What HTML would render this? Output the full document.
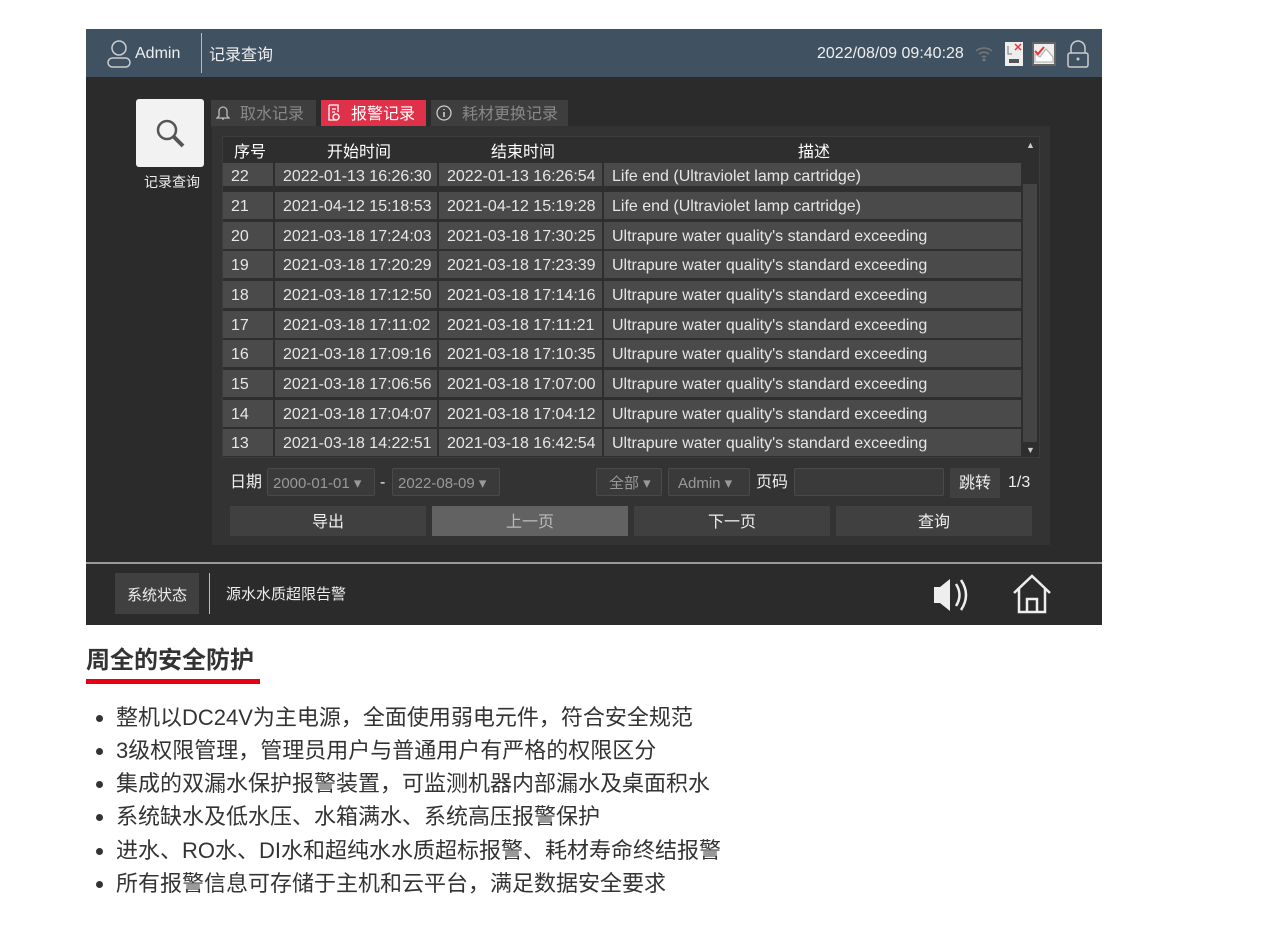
<!DOCTYPE html>
<html><head><meta charset="utf-8"><style>
*{margin:0;padding:0;box-sizing:border-box}
body{width:1266px;height:939px;background:#fff;position:relative;overflow:hidden;font-family:"Liberation Sans","Noto Sans CJK SC",sans-serif}
.a{position:absolute}
.scr{left:86px;top:29px;width:1016px;height:596px;background:#2b2b2b;}
.hd{left:0;top:0;width:1016px;height:48px;background:#405262;color:#eee;font-size:16px}
.t{color:#ddd;font-size:16px;white-space:nowrap;line-height:20px}
.row{position:absolute;left:0;width:800px;height:27px}
.c{position:absolute;top:0;height:27px;background:#4a4a4a;color:#e6e6e6;font-size:16px;line-height:30px;padding-left:8px;white-space:nowrap}
.btn{position:absolute;top:0;height:30px;background:#404040;color:#eee;font-size:16px;text-align:center;line-height:34px}
.sel{position:absolute;height:28px;border:1px solid #4a4a4a;background:#3a3a3a;color:#999;font-size:15px;line-height:30px;padding-left:5px;border-radius:2px}
li{list-style:none;position:absolute;left:96px;font-size:22px;line-height:28px;color:#333;white-space:nowrap}
li:before{content:"";position:absolute;left:0;top:11px;width:7px;height:7px;border-radius:50%;background:#333}
li span{margin-left:20px}
</style></head><body>
<div class="a scr">
 <div class="a hd">
  <svg class="a" style="left:20px;top:10px" width="26" height="30" viewBox="0 0 26 30"><circle cx="13" cy="9" r="7" fill="none" stroke="#ccc" stroke-width="1.5"/><rect x="2" y="19" width="22" height="9" rx="4.5" fill="none" stroke="#ccc" stroke-width="1.5"/></svg>
  <div class="a" style="left:49px;top:15px;line-height:20px">Admin</div>
  <div class="a" style="left:115px;top:4px;width:1px;height:40px;background:#bbb"></div>
  <div class="a" style="left:123px;top:17px;line-height:20px">记录查询</div>
  <div class="a" style="left:731px;top:15px;line-height:20px">2022/08/09 09:40:28</div>
  <svg class="a" style="left:888px;top:16px" width="20" height="18"><path d="M2 6a12 12 0 0 1 16 0M5 9a8 8 0 0 1 10 0M8 12a4 4 0 0 1 4 0" stroke="#777" stroke-width="1.5" fill="none"/><circle cx="10" cy="15" r="1.5" fill="#777"/></svg>
  <svg class="a" style="left:919px;top:13px" width="20" height="26"><rect x="0" y="0" width="18" height="24" fill="#eee"/><path d="M10 2l6 6M16 2l-6 6" stroke="#e33" stroke-width="1.5"/><path d="M3 4v8h4" stroke="#777" fill="none"/><rect x="4" y="17" width="10" height="4" fill="#555"/></svg>
  <svg class="a" style="left:946px;top:13px" width="24" height="24"><rect x="1" y="1" width="22" height="22" fill="#eee" stroke="#666" stroke-width="2"/><path d="M3 20V12l5 3 6-8 7 8v5z" fill="#fff" stroke="#aaa"/><path d="M3 9l3 3 6-7" stroke="#e33" stroke-width="2" fill="none"/></svg>
  <svg class="a" style="left:979px;top:10px" width="26" height="30"><path d="M6 14V9a7 7 0 0 1 14 0v5" stroke="#ccc" stroke-width="1.5" fill="none"/><rect x="3" y="14" width="20" height="14" rx="2" fill="none" stroke="#ccc" stroke-width="1.5"/><circle cx="13" cy="20" r="1.5" fill="#ccc"/></svg>
 </div>
 <div class="a" style="left:50px;top:70px;width:68px;height:68px;background:#f2f2f2;border-radius:3px"></div>
 <svg class="a" style="left:68px;top:88px" width="34" height="34"><circle cx="13" cy="13" r="9" stroke="#555" stroke-width="2.5" fill="none"/><path d="M20 20l9 9" stroke="#555" stroke-width="4"/></svg>
 <div class="a t" style="left:58px;top:143px;font-size:14px;color:#eee">记录查询</div>
 <div class="a" style="left:125px;top:71px;width:105px;height:27px;background:#3e3e3e;color:#888;font-size:16px;line-height:30px;padding-left:29px">取水记录</div>
 <svg class="a" style="left:130px;top:76px" width="14" height="16"><path d="M3 11V6a4 4 0 0 1 8 0v5l2 2H1z M6 14h2" stroke="#bbb" stroke-width="1.3" fill="none"/></svg>
 <div class="a" style="left:235px;top:71px;width:105px;height:27px;background:#e0314a;color:#fff;font-size:16px;line-height:30px;padding-left:30px">报警记录</div>
 <svg class="a" style="left:241px;top:75px" width="14" height="18"><path d="M2 1h9v7M2 1v15h6M5 5h4M5 8h3M9 10a3 3 0 1 0 0.1 0" stroke="#fff" stroke-width="1.3" fill="none"/></svg>
 <div class="a" style="left:345px;top:71px;width:137px;height:27px;background:#3e3e3e;color:#888;font-size:16px;line-height:30px;padding-left:31px">耗材更换记录</div>
 <svg class="a" style="left:350px;top:76px" width="16" height="16"><circle cx="8" cy="8" r="7" stroke="#ccc" stroke-width="1.3" fill="none"/><path d="M8 7v5M8 4v1" stroke="#ccc" stroke-width="1.6"/></svg>
 <div class="a" style="left:126px;top:97px;width:838px;height:419px;background:#333"></div>
 <div class="a" style="left:136px;top:107px;width:818px;height:322px;background:#2e2e2e;border:1px solid #3c3c3c;overflow:hidden">
  <div class="a t" style="left:11px;top:6px;color:#fff">序号</div>
  <div class="a t" style="left:104px;top:6px;color:#fff">开始时间</div>
  <div class="a t" style="left:268px;top:6px;color:#fff">结束时间</div>
  <div class="a t" style="left:575px;top:6px;color:#fff">描述</div>
  <div class="a" style="left:803px;top:3px;color:#ccc;font-size:9px;line-height:10px">▲</div>
  <div class="a" style="left:800px;top:47px;width:14px;height:258px;background:#444"></div>
  <div class="a" style="left:803px;top:308px;color:#ccc;font-size:9px;line-height:10px">▼</div>
  <div id="rows"></div>
 </div>
 <div class="a t" style="left:144px;top:444px;color:#eee">日期</div>
 <div class="sel" style="left:181px;top:439px;width:108px">2000-01-01 ▾</div>
 <div class="a t" style="left:294px;top:444px;color:#eee">-</div>
 <div class="sel" style="left:306px;top:439px;width:108px">2022-08-09 ▾</div>
 <div class="sel" style="left:510px;top:439px;width:66px;padding-left:12px">全部 ▾</div>
 <div class="sel" style="left:582px;top:439px;width:82px;padding-left:9px">Admin ▾</div>
 <div class="a t" style="left:670px;top:444px;color:#eee">页码</div>
 <div class="sel" style="left:708px;top:439px;width:150px"></div>
 <div class="a" style="left:864px;top:439px;width:50px;height:30px;background:#404040;color:#eee;font-size:16px;line-height:32px;text-align:center">跳转</div>
 <div class="a t" style="left:922px;top:444px;color:#eee">1/3</div>
 <div class="a" style="left:144px;top:477px;width:804px;height:30px">
  <div class="btn" style="left:0;width:196px">导出</div>
  <div class="btn" style="left:202px;width:196px;background:#626262;color:#bbb">上一页</div>
  <div class="btn" style="left:404px;width:196px">下一页</div>
  <div class="btn" style="left:606px;width:196px">查询</div>
 </div>
 <div class="a" style="left:0;top:533px;width:1016px;height:2px;background:#999"></div>
 <div class="a" style="left:29px;top:544px;width:84px;height:41px;background:#404040;color:#eee;font-size:15px;line-height:45px;text-align:center">系统状态</div>
 <div class="a" style="left:123px;top:544px;width:1px;height:41px;background:#bbb"></div>
 <div class="a t" style="left:140px;top:556px;color:#eee;font-size:15px">源水水质超限告警</div>
 <svg class="a" style="left:845px;top:545px" width="42" height="42"><path d="M3 13h6l10-8v32l-10-8H3z" fill="#eee"/><path d="M25 10q7 11 0 22M30 6q10 15 0 30" stroke="#eee" stroke-width="2.5" fill="none"/></svg>
 <svg class="a" style="left:925px;top:544px" width="42" height="42"><path d="M3 20L21 3l18 17M8 16v23h26V16M16 39V26h10v13" stroke="#eee" stroke-width="2.5" fill="none"/></svg>
</div>
<div class="a" style="left:86px;top:646px;font-size:24px;line-height:30px;font-weight:bold;color:#333">周全的安全防护</div>
<div class="a" style="left:86px;top:679px;width:174px;height:5px;background:#e60012"></div>
<ul>
<li style="top:704px"><span>整机以DC24V为主电源，全面使用弱电元件，符合安全规范</span></li>
<li style="top:737px"><span>3级权限管理，管理员用户与普通用户有严格的权限区分</span></li>
<li style="top:770px"><span>集成的双漏水保护报警装置，可监测机器内部漏水及桌面积水</span></li>
<li style="top:803px"><span>系统缺水及低水压、水箱满水、系统高压报警保护</span></li>
<li style="top:837px"><span>进水、RO水、DI水和超纯水水质超标报警、耗材寿命终结报警</span></li>
<li style="top:870px"><span>所有报警信息可存储于主机和云平台，满足数据安全要求</span></li>
</ul>
<script>
var d=[["22","2022-01-13 16:26:30","2022-01-13 16:26:54","Life end (Ultraviolet lamp cartridge)"],["21","2021-04-12 15:18:53","2021-04-12 15:19:28","Life end (Ultraviolet lamp cartridge)"],["20","2021-03-18 17:24:03","2021-03-18 17:30:25"],["19","2021-03-18 17:20:29","2021-03-18 17:23:39"],["18","2021-03-18 17:12:50","2021-03-18 17:14:16"],["17","2021-03-18 17:11:02","2021-03-18 17:11:21"],["16","2021-03-18 17:09:16","2021-03-18 17:10:35"],["15","2021-03-18 17:06:56","2021-03-18 17:07:00"],["14","2021-03-18 17:04:07","2021-03-18 17:04:12"],["13","2021-03-18 14:22:51","2021-03-18 16:42:54"]];
var h="";d.forEach(function(r,i){var t=i==0?26:55+(i-1)*29.65;var x=r[3]||"Ultrapure water quality's standard exceeding";var s=i==0?'height:23px;line-height:28px':'';
h+='<div class="row" style="top:'+t+'px"><div class="c" style="left:0;width:50px;'+s+'">'+r[0]+'</div><div class="c" style="left:52px;width:162px;'+s+'">'+r[1]+'</div><div class="c" style="left:216px;width:163px;'+s+'">'+r[2]+'</div><div class="c" style="left:381px;width:417px;'+s+'">'+x+'</div></div>';});
document.getElementById("rows").innerHTML=h;
</script>
</body></html>
